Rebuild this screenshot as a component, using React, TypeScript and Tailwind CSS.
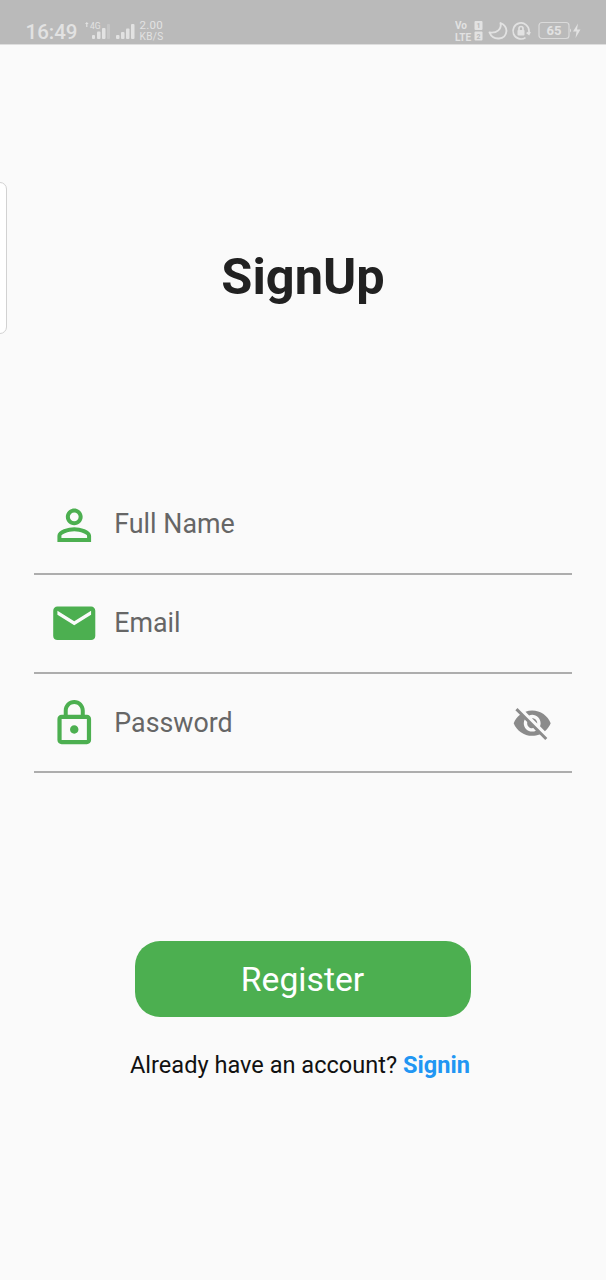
import type { ReactNode } from 'react';

const PERSON =
  'M12 5.9a2.1 2.1 0 1 1 0 4.2 2.1 2.1 0 0 1 0-4.2m0 9c2.97 0 6.1 1.46 6.1 2.1v1.1H5.9V17c0-.64 3.13-2.1 6.1-2.1M12 4C9.79 4 8 5.79 8 8s1.79 4 4 4 4-1.79 4-4-1.79-4-4-4zm0 9c-2.67 0-8 1.34-8 4v3h16v-3c0-2.66-5.33-4-8-4z';
const MAIL =
  'M20 4H4c-1.1 0-1.99.9-1.99 2L2 18c0 1.1.9 2 2 2h16c1.1 0 2-.9 2-2V6c0-1.1-.9-2-2-2zm0 4l-8 5-8-5V6l8 5 8-5v2z';
const LOCK =
  'M12 17c1.1 0 2-.9 2-2s-.9-2-2-2-2 .9-2 2 .9 2 2 2zm6-9h-1V6c0-2.76-2.24-5-5-5S7 3.24 7 6v2H6c-1.1 0-2 .9-2 2v10c0 1.1.9 2 2 2h12c1.1 0 2-.9 2-2V10c0-1.1-.9-2-2-2zM8.9 6c0-1.71 1.39-3.1 3.1-3.1s3.1 1.39 3.1 3.1v2H8.9V6zM18 20H6V10h12v10z';
const EYE_OFF =
  'M12 7c2.76 0 5 2.24 5 5 0 .65-.13 1.26-.36 1.83l2.92 2.92c1.51-1.26 2.7-2.89 3.43-4.75-1.73-4.39-6-7.5-11-7.5-1.4 0-2.74.25-3.98.7l2.16 2.16C10.74 7.13 11.35 7 12 7zM2 4.27l2.28 2.28.46.46C3.08 8.3 1.78 10.02 1 12c1.73 4.39 6 7.5 11 7.5 1.55 0 3.03-.3 4.38-.84l.42.42L19.73 22 21 20.73 3.27 3 2 4.27zM7.53 9.8l1.55 1.55c-.05.21-.08.43-.08.65 0 1.66 1.34 3 3 3 .22 0 .44-.03.65-.08l1.55 1.55c-.67.33-1.41.53-2.2.53-2.76 0-5-2.24-5-5 0-.79.2-1.53.53-2.2zm4.31-.78l3.15 3.15.02-.16c0-1.66-1.34-3-3-3l-.17.01z';

function Glyph({ d, className }: { d: string; className: string }) {
  return (
    <svg viewBox="0 0 24 24" fill="currentColor" className={className}>
      <path d={d} />
    </svg>
  );
}

function Field({ icon, label, className, children }: { icon: string; label: string; className: string; children?: ReactNode }) {
  return (
    <div className={`flex items-start border-b-2 border-[#adadad] pl-[14.5px] pr-5 ${className}`}>
      <Glyph d={icon} className="size-[50.5px] shrink-0 text-[#4caf50]" />
      <span className="ml-[15.3px] mt-[8.700px] flex-1 text-[26.800px] leading-8 text-[#666666]">{label}</span>
      {children}
    </div>
  );
}

function StatusBar() {
  return (
    <header className="flex h-[44px] items-start justify-between bg-[#bababa] pl-[25.5px] pr-[25px] pt-[20px] text-[#e2e2e2]">
      <div className="flex h-[22px] items-center">
        <span className="mt-[2px] w-[59px] text-[20.5px] font-medium leading-[22px]">16:49</span>
        <svg viewBox="0 0 26 22" className="h-[22px] w-[26px]" fill="currentColor">
          <path d="M0 4l1.800-2L3.600 4H2.400v3H1.200V4z" />
          <text x="5" y="9" fontSize="8.5" fontFamily="Roboto, sans-serif">4G</text>
          <rect x="7" y="15" width="3" height="4" rx="1" />
          <rect x="12" y="11.500" width="3.500" height="7.500" rx="1" />
          <rect x="17" y="8" width="3.500" height="11" rx="1" />
          <rect x="22" y="4" width="3" height="15" rx="1" opacity="0.3" />
        </svg>
        <svg viewBox="0 0 20 22" className="ml-[5px] h-[22px] w-[20px]" fill="currentColor">
          <rect x="0" y="15" width="3.500" height="4" rx="1" />
          <rect x="5" y="12" width="3.500" height="7" rx="1" />
          <rect x="10" y="8.500" width="3.500" height="10.500" rx="1" />
          <rect x="15" y="4" width="3.500" height="15" rx="1" />
        </svg>
        <div className="ml-[4px] flex flex-col">
          <span className="text-[11.500px] leading-[11px] tracking-[0.3px]">2.00</span>
          <span className="text-[10px] leading-[11px] tracking-[0.4px]">KB/S</span>
        </div>
      </div>
      <div className="flex h-[22px] items-center">
        <svg viewBox="0 0 28 22" className="h-[22px] w-[28px]" fill="currentColor" fontFamily="Roboto, sans-serif" fontWeight="700">
          <text x="0" y="8.800" fontSize="10">Vo</text>
          <text x="0" y="20.500" fontSize="10">LTE</text>
          <rect x="19.500" y="1" width="8" height="9" rx="1" />
          <rect x="19.500" y="11.500" width="8" height="9" rx="1" />
          <text x="21.500" y="8.200" fontSize="7" fill="#bababa">1</text>
          <text x="21.500" y="18.700" fontSize="7" fill="#bababa">2</text>
        </svg>
        <svg viewBox="0 0 20 20" className="ml-[5px] size-[20px]" fill="none" stroke="currentColor" strokeWidth="1.900" strokeLinejoin="round">
          <path d="M12.500 2c1.500 6-3.500 10.500-11 9.500 3.500 8.500 16 8 17-1.500 0-3.500-2.500-6.500-6-8z" />
        </svg>
        <svg viewBox="0 0 20 20" className="ml-[3px] size-[20px]" fill="none" stroke="currentColor" strokeWidth="1.700">
          <path d="M14.500 16.600A8 8 0 1 1 18 10v2" />
          <path d="M15.700 11.500l2.200 1.700 1.200-2.400" />
          <rect x="6.500" y="9" width="7" height="5.500" rx="0.800" fill="currentColor" stroke="none" />
          <path d="M8 9V7.500a2 2 0 0 1 4 0V9" />
        </svg>
        <svg viewBox="0 0 44 22" className="ml-[6px] h-[22px] w-[44px]" fill="currentColor">
          <rect x="2" y="2.500" width="30" height="16" rx="3" fill="none" stroke="currentColor" strokeWidth="1.200" opacity="0.8" />
          <path d="M33 8.500q2 2 0 4z" />
          <text x="17" y="15.200" fontSize="13" fontWeight="700" textAnchor="middle" fontFamily="Roboto, sans-serif">65</text>
          <path d="M41 3.500l-5 8h3.500l-1 6.500 5-8.500H40z" />
        </svg>
      </div>
    </header>
  );
}

export default function App() {
  return (
    <div className="relative flex h-[1280px] w-[606px] flex-col overflow-hidden bg-[#fafafa] font-['Roboto',sans-serif]">
      <StatusBar />
      <div className="h-px shrink-0 bg-[#dedede]" />
      <div className="absolute left-[-10px] top-[182px] h-[152px] w-[17px] rounded-[7px] border border-[#d2d2d2] bg-white" />
      <h1 className="mt-[202px] text-center text-[50.5px] font-bold leading-[60px] text-[#212121]">SignUp</h1>
      <form className="mx-[34px] mt-[168px] flex flex-col">
        <Field icon={PERSON} label="Full Name" className="h-[100px] pt-[24.700px]" />
        <Field icon={MAIL} label="Email" className="h-[99px] pt-[23.200px]" />
        <Field icon={LOCK} label="Password" className="h-[99px] pt-[24.200px]">
          <Glyph d={EYE_OFF} className="mt-[5px] size-[40.4px] text-[#8b8b8b]" />
        </Field>
      </form>
      <button className="ml-[135px] mt-[168px] h-[76px] w-[336px] rounded-[25px] bg-[#4caf50] pr-px pt-[2px] text-[33.67px] leading-10 text-white">
        Register
      </button>
      <p className="ml-[130px] mt-[34px] whitespace-pre text-[23.57px] leading-7 text-[#111111]">
        Already have an account? <a className="font-bold text-[#2196f3]">Signin</a>
      </p>
    </div>
  );
}
